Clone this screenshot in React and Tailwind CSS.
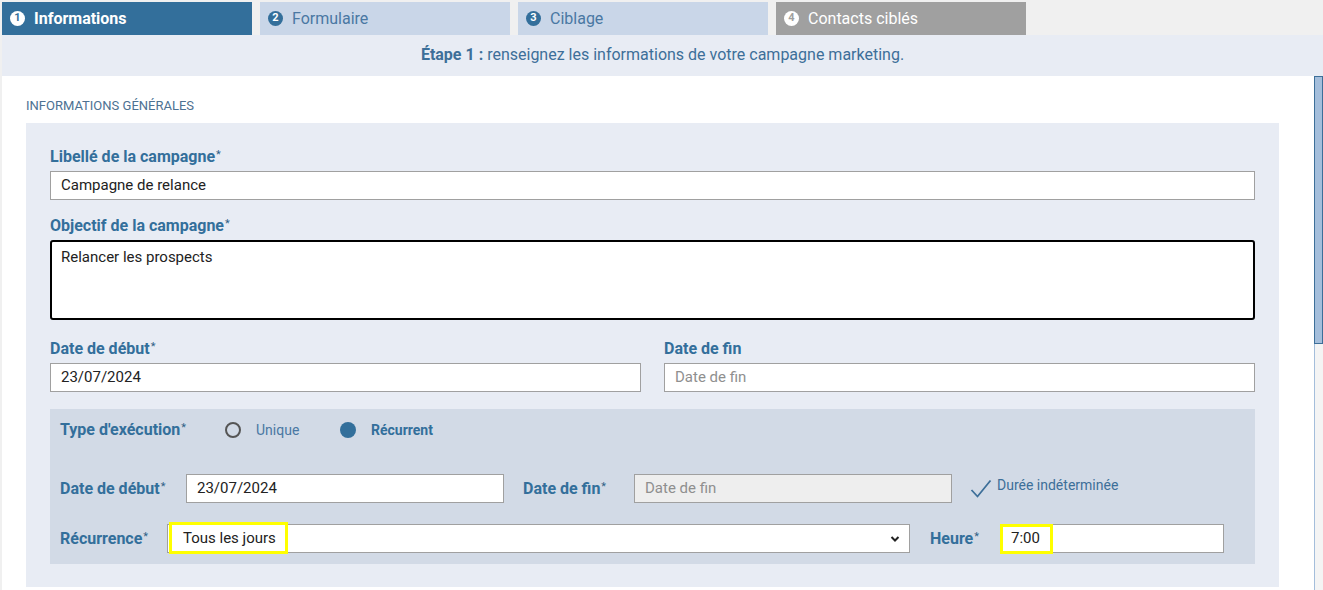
import React from "react";

const label = "text-[16px] font-bold text-[#336f9b] leading-[20px] whitespace-nowrap";
const input =
  "h-[29px] border border-[#a0a0a0] px-[10px] text-[15px] flex items-center";

function Star() {
  return <sup className="text-[11px] font-normal ml-[1px] relative -top-[4px] text-[#2f5f86]">*</sup>;
}

function Tab({ n, text, variant }) {
  const styles = {
    active: "bg-[#336f9b] text-white font-bold",
    idle: "bg-[#c9d6e8] text-[#4a78a3]",
    off: "bg-[#a0a0a0] text-white",
  };
  const circle = {
    active: "bg-white text-[#336f9b]",
    idle: "bg-[#336f9b] text-white",
    off: "bg-white text-[#a0a0a0]",
  };
  return (
    <div className={`w-[250px] h-[33px] flex items-center pl-[8px] gap-[9px] text-[16px] ${styles[variant]}`}>
      <span className={`w-[15px] h-[15px] rounded-full flex items-center justify-center text-[11px] font-bold ${circle[variant]}`}>
        {n}
      </span>
      {text}
    </div>
  );
}

export default function App() {
  return (
    <div
      className="w-[1323px] h-[590px] overflow-hidden bg-[#f0f0f0] flex flex-col"
      style={{ fontFamily: "Roboto, 'Noto Sans', sans-serif" }}
    >
      {/* Tabs */}
      <div className="flex gap-[8px] pt-[2px] pl-[2px]">
        <Tab n="1" text="Informations" variant="active" />
        <Tab n="2" text="Formulaire" variant="idle" />
        <Tab n="3" text="Ciblage" variant="idle" />
        <Tab n="4" text="Contacts ciblés" variant="off" />
      </div>

      {/* Step bar */}
      <div className="ml-[2px] h-[41px] bg-[#e8ecf4] flex items-center justify-center text-[16px] text-[#3d6f99] pb-[1px]">
        <span className="font-bold mr-[4px]">Étape 1 :</span> renseignez les informations de votre campagne marketing.
      </div>

      {/* Body */}
      <div className="flex flex-1 ml-[2px]">
        <div className="flex-1 bg-white pl-[24px] pr-[35px] pt-[22px]">
          <div className="text-[13px] text-[#4d7192] leading-[16px] mb-[9px]">INFORMATIONS GÉNÉRALES</div>

          <div className="bg-[#e8ecf4] px-[24px] pt-[24px] pb-[23px]">
            <div className={label}>
              Libellé de la campagne<Star />
            </div>
            <div className={`${input} mt-[4px] bg-white text-[#222]`}>Campagne de relance</div>

            <div className={`${label} mt-[16px]`}>
              Objectif de la campagne<Star />
            </div>
            <div className="mt-[4px] h-[80px] bg-white border-2 border-black rounded-[3px] px-[9px] pt-[4px] text-[15px] text-[#222]">
              Relancer les prospects
            </div>

            <div className="flex gap-[23px] mt-[19px]">
              <div className="flex-1">
                <div className={label}>
                  Date de début<Star />
                </div>
                <div className={`${input} mt-[4px] bg-white text-[#222]`}>23/07/2024</div>
              </div>
              <div className="flex-1">
                <div className={label}>Date de fin</div>
                <div className={`${input} mt-[4px] bg-white text-[#8f8f8f]`}>Date de fin</div>
              </div>
            </div>

            {/* Execution sub-panel */}
            <div className="mt-[17px] bg-[#d2dae6] pl-[10px] pr-[31px] pt-[11px] pb-[11px]">
              <div className="flex items-center h-[20px]">
                <div className={`${label} w-[165px]`}>
                  Type d'exécution<Star />
                </div>
                <span className="w-[16px] h-[16px] rounded-full border-2 border-[#555]" />
                <span className="ml-[15px] w-[84px] text-[14px] text-[#4a78a3]">Unique</span>
                <span className="w-[16px] h-[16px] rounded-full bg-[#336f9b]" />
                <span className="ml-[15px] text-[14px] font-bold text-[#336f9b]">Récurrent</span>
              </div>

              <div className="flex items-center mt-[34px]">
                <div className={`${label} w-[126px]`}>
                  Date de début<Star />
                </div>
                <div className={`${input} w-[318px] bg-white text-[#222]`}>23/07/2024</div>
                <div className={`${label} ml-[19px] w-[111px]`}>
                  Date de fin<Star />
                </div>
                <div className={`${input} w-[318px] bg-[#eeeeee] text-[#8f8f8f]`}>Date de fin</div>
                <svg width="22" height="20" viewBox="0 0 22 20" className="ml-[18px]">
                  <path d="M1.5 11 L7.5 17.5 L20.5 1.5" fill="none" stroke="#3d6f99" strokeWidth="1.8" />
                </svg>
                <span className="ml-[5px] text-[14px] text-[#3d6f99] -mt-[6px]">Durée indéterminée</span>
              </div>

              <div className="flex items-center mt-[21px]">
                <div className={`${label} w-[107px]`}>
                  Récurrence<Star />
                </div>
                <div className={`${input} w-[743px] relative justify-between bg-white text-[#222]`}>
                  <span className="absolute left-[1px] -top-[3px] w-[119px] h-[32px] border-[3px] border-[#ffff00]" />
                  <span className="pl-[5px]">Tous les jours</span>
                  <svg width="10" height="8" viewBox="0 0 10 8" className="mr-[-1px]">
                    <path d="M1.5 2 L5 5.5 L8.5 2" fill="none" stroke="#222" strokeWidth="2" />
                  </svg>
                </div>
                <div className={`${label} ml-[20px] w-[70px]`}>
                  Heure<Star />
                </div>
                <div className={`${input} w-[224px] relative bg-white text-[#222]`}>
                  <span className="absolute -left-[1px] -top-[1px] w-[53px] h-[30px] border-[3px] border-[#ffff00]" />
                  <span>7:00</span>
                </div>
              </div>
            </div>
          </div>
        </div>

        {/* Scrollbar */}
        <div className="w-[9px] bg-[#f4f4f4] border-l border-[#a4bedb] flex flex-col">
          <div className="h-[268px] bg-[#a4bedb] border border-[#3d6f99] -ml-[1px]" />
        </div>
      </div>
    </div>
  );
}
